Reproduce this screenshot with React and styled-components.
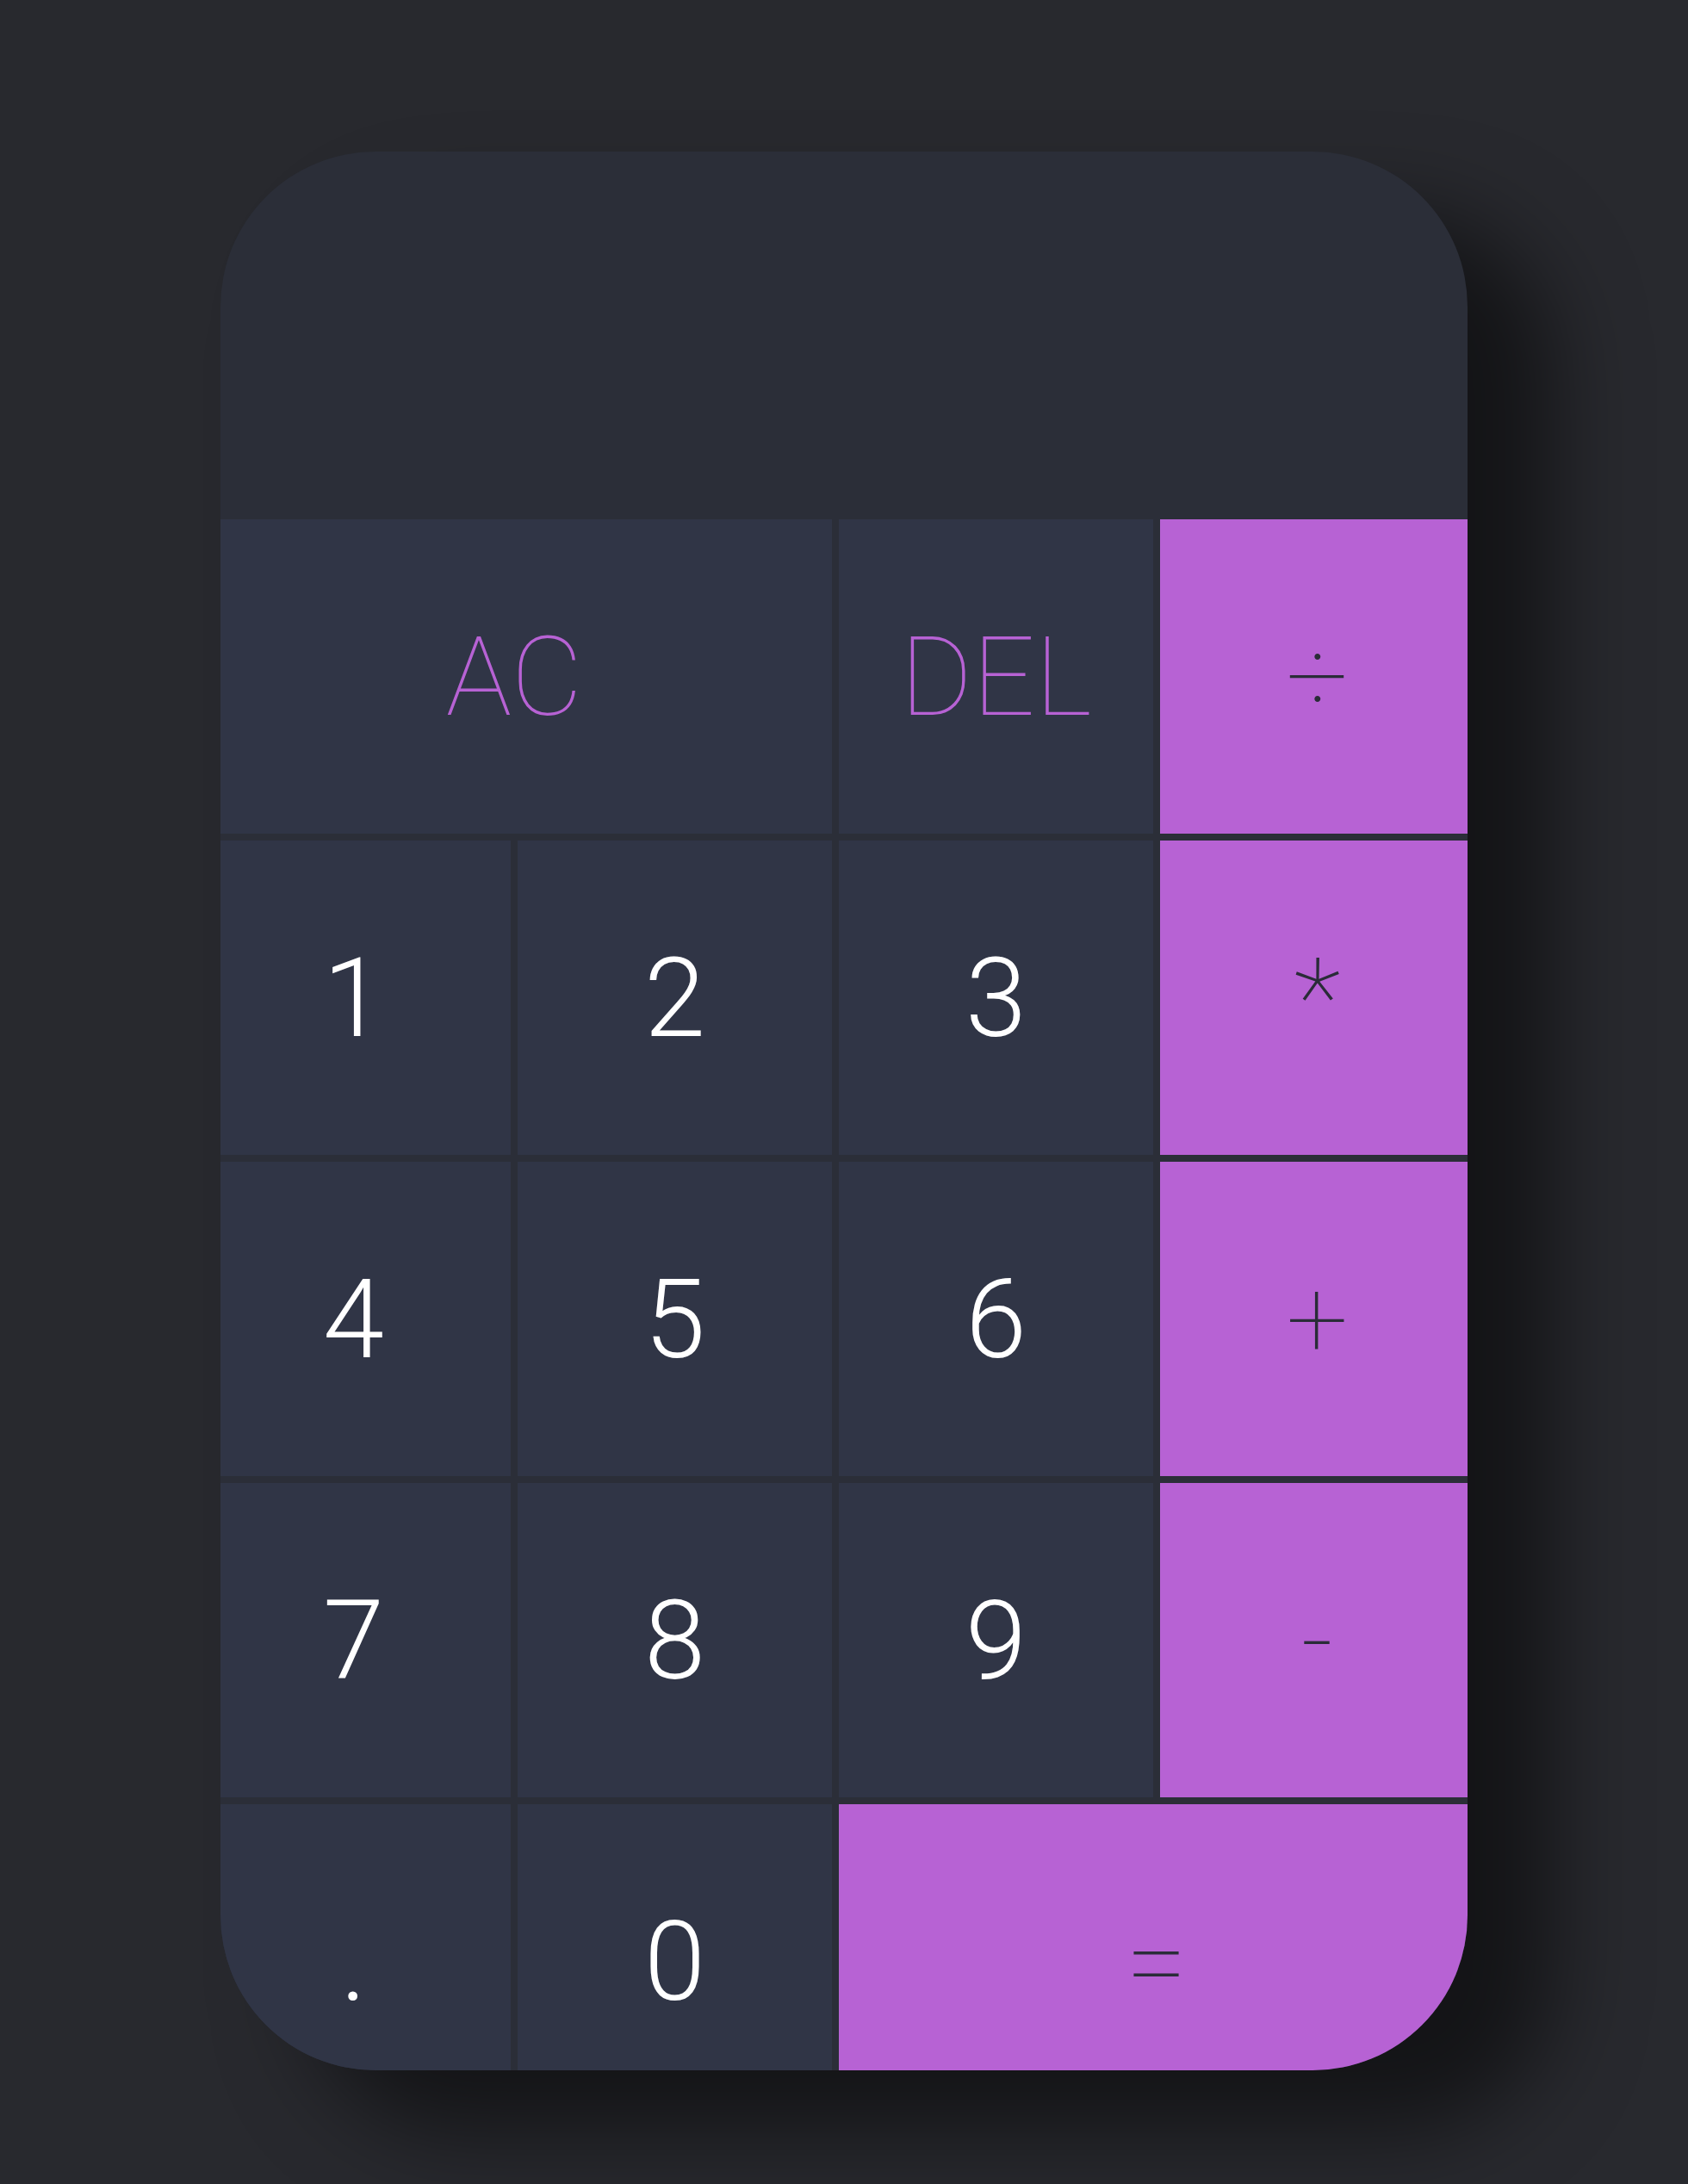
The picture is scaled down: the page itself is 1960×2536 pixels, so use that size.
import React from 'react';
import styled, {createGlobalStyle} from "styled-components"

const GlobalStyle = createGlobalStyle`
  html, body {
    margin: 0;
    padding: 0;
    background: #28292e;
  }
  body {
    font-family: Roboto, "Liberation Sans", sans-serif;
  }
`

const Page = styled.div`
  min-height: 2536px;
  display: flex;
  justify-content: center;
  align-items: flex-start;
  padding-top: 176px;
  box-sizing: border-box;
`

const Calculator = styled.div`
  width: 1448px;
  height: 2228px;
  background: #2b2e38;
  border-radius: 180px;
  overflow: hidden;
  box-shadow: 100px 72px 100px rgba(0, 0, 0, 0.5);
  display: flex;
  flex-direction: column;
`

const Display = styled.div`
  height: 427px;
  flex-shrink: 0;
`

const Keypad = styled.div`
  display: grid;
  grid-template-columns: repeat(4, 365px);
  grid-auto-rows: 365px;
  gap: 8px;
  width: 1484px;
  margin-left: -28px;
`

// digits are Light, the purple labels and operators Thin
const Key = styled.button`
  border: none;
  outline: none;
  margin: 0;
  padding: 0;
  display: flex;
  align-items: center;
  justify-content: center;
  font-family: Roboto, "Liberation Sans", sans-serif;
  font-weight: ${props => props.op || props.accent ? 100 : 300};
  font-size: 128px;
  cursor: pointer;
  grid-column: ${props => props.span ? `span ${props.span}` : "auto"};
  background: ${props => props.op ? "#b762d4" : "#303546"};
  color: ${props => props.op ? "#2a2c38" : props.accent ? "#b762d4" : "#ffffff"};
`

const keys = [
  {label: "AC", span: 2, accent: true},
  {label: "DEL", accent: true},
  {label: "÷", op: true},
  {label: "1"}, {label: "2"}, {label: "3"}, {label: "*", op: true},
  {label: "4"}, {label: "5"}, {label: "6"}, {label: "+", op: true},
  {label: "7"}, {label: "8"}, {label: "9"}, {label: "-", op: true},
  {label: "."}, {label: "0"}, {label: "=", span: 2, op: true},
]

const App = () => {
  return (
    <Page>
      <GlobalStyle />
      <Calculator>
        <Display />
        <Keypad>
          {keys.map(k => (
            <Key key={k.label} span={k.span} op={k.op} accent={k.accent}>{k.label}</Key>
          ))}
        </Keypad>
      </Calculator>
    </Page>
  );
}

export default App;
